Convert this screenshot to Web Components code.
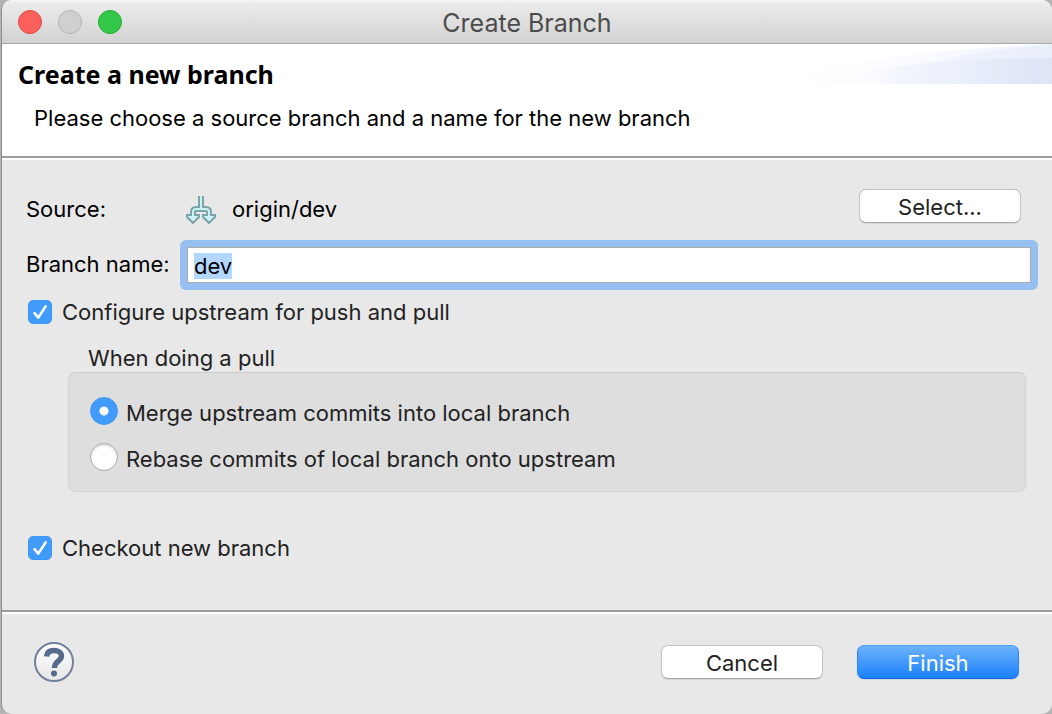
<!DOCTYPE html>
<html lang="en">
<head>
<meta charset="utf-8">
<title>Create Branch</title>
<style>
  body {
    margin: 0;
    background: #b4b4b4;
    color: #000;
    font: 22px/28px Inter, Roboto, sans-serif;
  }
</style>
</head>
<body>
<dialog-window>
  <title-bar slot="title">Create Branch</title-bar>
  <wizard-header slot="header">
    <span slot="heading">Create a new branch</span>
    Please choose a source branch and a name for the new branch
  </wizard-header>
  <source-row label="Source:" value="origin/dev"><push-button>Select...</push-button></source-row>
  <text-field value="dev">Branch name:</text-field>
  <check-box checked>Configure upstream for push and pull</check-box>
  <pull-options></pull-options>
  <check-box checked>Checkout new branch</check-box>
  <help-button slot="footer"></help-button>
  <push-button slot="footer">Cancel</push-button>
  <push-button slot="footer" primary>Finish</push-button>
</dialog-window>

<script>
class BaseElement extends HTMLElement {
  constructor() {
    super();
    this.attachShadow({ mode: 'open' }).innerHTML =
      `<style>*{box-sizing:border-box} input,button{font:inherit;color:inherit;margin:0} :host{display:block}</style>` + this.render();
  }
  render() { return ''; }
}

customElements.define('dialog-window', class extends BaseElement {
  render() {
    return `<style>
      :host { display: flex; flex-direction: column; min-height: 100vh; box-sizing: border-box;
        margin-left: 1px; border-left: 1px solid #8c8c8c; border-radius: 10px; overflow: hidden; background: #e8e8e8; }
      main { flex: 1; padding: 28px 0 24px; }
      footer { display: flex; align-items: center; gap: 34px; height: 104px; padding: 0 33px 3px 31px;
        border-top: 2px solid #9c9c9c; box-shadow: inset 0 2px #fff; }
      ::slotted(help-button) { margin-right: auto; }
      ::slotted(check-box) { margin-left: 26px; }
      ::slotted(text-field) { margin-top: 19px; margin-bottom: 9px; }
      ::slotted(pull-options) { margin: 18px 26px 42px 66px; }
    </style>
    <slot name="title"></slot>
    <slot name="header"></slot>
    <main><slot></slot></main>
    <footer><slot name="footer"></slot></footer>`;
  }
});

customElements.define('title-bar', class extends BaseElement {
  render() {
    return `<style>
      :host { display: grid; grid-template-columns: 1fr auto 1fr; align-items: center; height: 44px; box-sizing: border-box;
        padding: 0 16px; border-bottom: 1px solid #a9a9a9; color: #4c4c4c;
        background: linear-gradient(#f6f6f6 0, #ebebeb 3px, #d2d2d2); font-size: 25px; }
      .lights { display: flex; gap: 16px; }
      .title { padding-top: 2px; }
      button { width: 24px; height: 24px; padding: 0; border: 1px solid; border-radius: 50%; }
      .close { background: #fc605c; border-color: #e2463f; }
      .min { background: #d0d0d0; border-color: #b3b3b3; }
      .zoom { background: #34c84a; border-color: #1dad2b; }
    </style>
    <div class="lights">
      <button class="close" aria-label="Close"></button>
      <button class="min" aria-label="Minimize" disabled></button>
      <button class="zoom" aria-label="Zoom"></button>
    </div>
    <span class="title"><slot></slot></span>`;
  }
});

customElements.define('wizard-header', class extends BaseElement {
  render() {
    return `<style>
      :host { position: relative; height: 116px; box-sizing: border-box; padding: 16px 16px 0;
        background: #fff; border-bottom: 2px solid #fff; box-shadow: inset 0 -2px #9c9c9c; }
      h1 { margin: 0; font: bold 25px/28px "Noto Sans", "Open Sans", sans-serif; }
      p { margin: 16px 0 0 16px; }
      svg { position: absolute; top: 0; right: 0; }
    </style>
    <svg width="282" height="40" viewBox="0 0 282 40" aria-hidden="true">
      <defs>
        <linearGradient id="far"><stop offset="0" stop-color="#fff"/><stop offset=".5" stop-color="#fafbff"/><stop offset="1" stop-color="#f0f4fd"/></linearGradient>
        <linearGradient id="mid"><stop offset="0" stop-color="#f4f7fe" stop-opacity="0"/><stop offset=".5" stop-color="#eff3fc"/><stop offset="1" stop-color="#e8eefa"/></linearGradient>
        <linearGradient id="near"><stop offset="0" stop-color="#eef2fc" stop-opacity="0"/><stop offset=".45" stop-color="#ebf0fb"/><stop offset="1" stop-color="#dce4f6"/></linearGradient>
      </defs>
      <path d="M4 40Q90 8 282 0V40Z" fill="url(#far)"/>
      <path d="M86 40V28Q150 22 190 12 230 4 282 1V40Z" fill="url(#mid)"/>
      <path d="M100 40V26Q180 14 282 14V40Z" fill="url(#near)"/>
    </svg>
    <h1><slot name="heading"></slot></h1>
    <p><slot></slot></p>`;
  }
});

customElements.define('source-row', class extends BaseElement {
  render() {
    return `<style>
      :host { display: grid; grid-template-columns: 160px 30px 1fr auto; align-items: center; padding: 0 31px 0 24px; height: 34px; }
      output { padding-left: 16px; }
      .text { padding-top: 6px; }
      svg { margin-top: 8px; }
    </style>
    <span class="text" id="label"></span>
    <svg width="30" height="28" viewBox="0 0 30 28" aria-hidden="true">
      <path d="M15 0V13M7 20V16Q7 13 10 13H20Q23 13 23 16V20" fill="none" stroke="#7ba5a8" stroke-width="6"/>
      <path d="M1 19H13V21L7 27 1 21ZM17 19H29V21L23 27 17 21Z" fill="#cdf2f3" stroke="#7ba5a8" stroke-width="2"/>
      <path d="M15 0V13M7 22V16Q7 13 10 13H20Q23 13 23 16V22" fill="none" stroke="#cdf2f3" stroke-width="2"/>
    </svg>
    <output class="text" aria-labelledby="label"></output>
    <slot></slot>`;
  }
  connectedCallback() {
    this.shadowRoot.getElementById('label').textContent = this.getAttribute('label');
    this.shadowRoot.querySelector('output').textContent = this.getAttribute('value');
  }
});

customElements.define('text-field', class extends BaseElement {
  render() {
    return `<style>
      :host { display: grid; grid-template-columns: 154px 1fr; align-items: center; padding: 6px 21px 6px 24px; }
      label { padding-bottom: 2px; }
      input { min-width: 0; width: auto; height: 36px; margin-left: 7px; padding: 2px 6px 0; border: 1px solid #acacac; border-radius: 0;
        background: #fff; outline: 0; box-shadow: 0 0 0 7px #96c0f1; clip-path: inset(-7px round 6px); }
      input::selection { background: #b3d7ff; color: #000; }
    </style>
    <label for="field"><slot></slot></label>
    <input id="field" type="text">`;
  }
  connectedCallback() {
    const field = this.shadowRoot.getElementById('field');
    field.value = this.getAttribute('value');
    field.focus();
    field.select();
  }
});

customElements.define('check-box', class extends BaseElement {
  render() {
    return `<style>
      label { display: flex; align-items: center; gap: 10px; color: #222; }
      .box { display: grid; }
      .box > * { grid-area: 1 / 1; }
      input { appearance: none; width: 24px; height: 24px; border-radius: 5px; background: #fff; border: 1px solid #b0b0b0; }
      input:checked { background: #409bfa; border-color: #3b96f5; }
      svg { pointer-events: none; visibility: hidden; }
      input:checked + svg { visibility: visible; }
    </style>
    <label><span class="box"><input type="checkbox">
      <svg width="24" height="24" viewBox="0 0 24 24" aria-hidden="true"><path d="M6.5 13.2 10.3 17.6 17.6 6.4" fill="none" stroke="#fff" stroke-width="2.6" stroke-linecap="round" stroke-linejoin="round"/></svg>
    </span><span><slot></slot></span></label>`;
  }
  connectedCallback() {
    this.shadowRoot.querySelector('input').checked = this.hasAttribute('checked');
  }
});

customElements.define('pull-options', class extends BaseElement {
  render() {
    return `<style>
      :host { color: #222; }
      fieldset { min-width: 0; margin: 0; padding: 0; border: 0; }
      legend { padding: 0 0 0 20px; }
      .panel { display: grid; gap: 16px; padding: 24px 21px 18px; border: 1px solid #d3d3d3; border-top-color: #cbcbcb; border-radius: 7px; background: #dedede; }
      label { display: flex; align-items: flex-start; gap: 8px; }
      label span { padding-top: 2px; }
      input { appearance: none; flex: none; width: 28px; height: 28px; border: 1px solid #a8a8a8; border-radius: 50%; background: #fff; box-shadow: inset 0 2px 2px #e4e4e4; }
      input:checked { border-color: #3b96f5; background: radial-gradient(circle, #fff 4px, #409bfa 5px); box-shadow: none; }
    </style>
    <fieldset>
      <legend>When doing a pull</legend>
      <div class="panel">
        <label><input type="radio" name="pull" checked><span>Merge upstream commits into local branch</span></label>
        <label><input type="radio" name="pull"><span>Rebase commits of local branch onto upstream</span></label>
      </div>
    </fieldset>`;
  }
});

customElements.define('push-button', class extends BaseElement {
  render() {
    return `<style>
      button { display: block; width: 162px; height: 34px; padding: 2px 0 0; border: 1px solid #c4c4c4; border-bottom-color: #a8a8a8; border-radius: 7px;
        background: #fff; color: #222; line-height: 28px; box-shadow: 0 1px 1px #d4d4d4; }
      :host([primary]) button { border-color: #4c9ff5 #2b83f5 #1064f0; background: linear-gradient(#6db3fa, #1a80fd); color: #fff; }
    </style>
    <button type="button"><slot></slot></button>`;
  }
});

customElements.define('help-button', class extends BaseElement {
  render() {
    return `<style>
      button { display: block; padding: 0; border: 0; background: none; }
      svg { display: block; }
    </style>
    <button type="button" aria-label="Help">
      <svg width="42" height="42" viewBox="0 0 42 42" aria-hidden="true">
        <defs><linearGradient id="face" x2="0" y2="1"><stop stop-color="#fff"/><stop offset="1" stop-color="#e6e6e6"/></linearGradient></defs>
        <circle cx="21" cy="21" r="19" fill="url(#face)" stroke="#71809d" stroke-width="2"/>
        <path d="M13.500 15.500C14 11 17 9.500 21 9.500S28.500 11.500 28.500 15C28.500 20 21.500 20 21.500 27" fill="none" stroke="#566b8c" stroke-width="5.400"/>
        <circle cx="21" cy="32.500" r="3" fill="#566b8c"/>
      </svg>
    </button>`;
  }
});
</script>
</body>
</html>
